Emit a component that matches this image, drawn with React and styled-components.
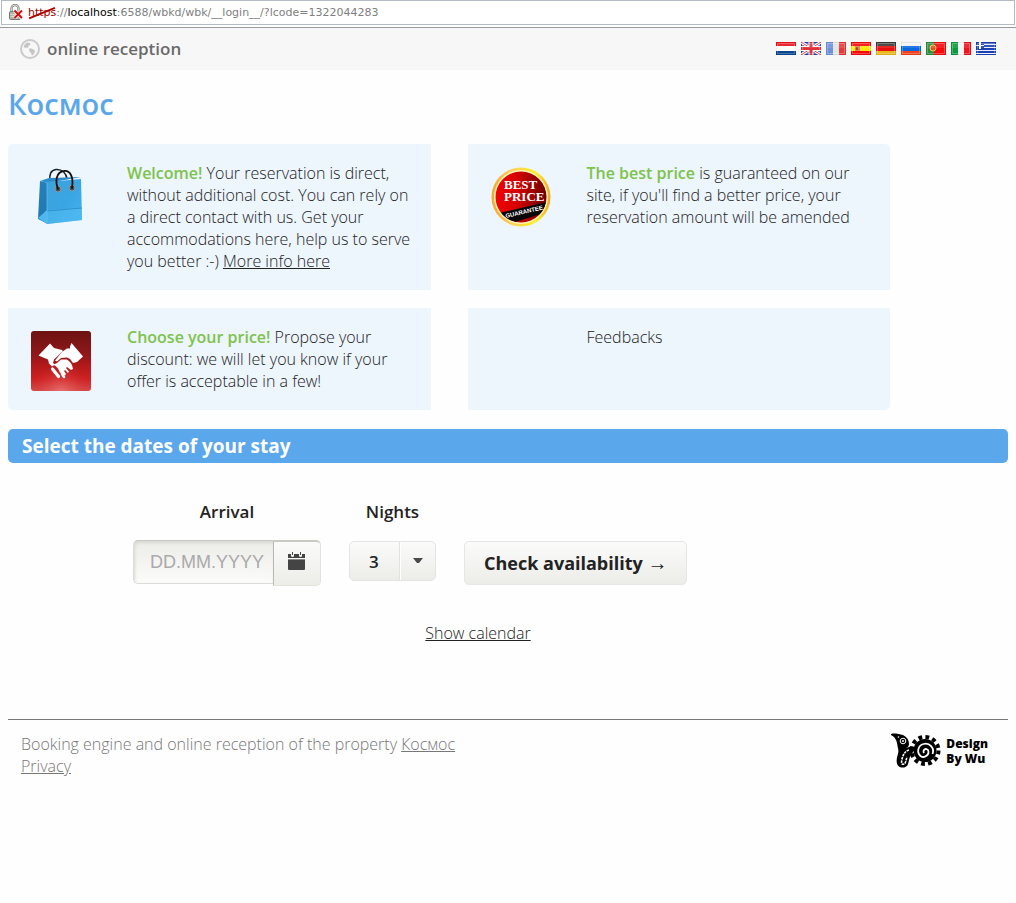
import { useState } from "react";
import styled, { createGlobalStyle } from "styled-components";

const flags = ["nl", "gb", "fr", "es", "de", "ru", "pt", "it", "gr"];

const languages = {
    nl: "Nederlands",
    gb: "English",
    fr: "Français",
    es: "Español",
    de: "Deutsch",
    ru: "Русский",
    pt: "Português",
    it: "Italiano",
    gr: "Ελληνικά",
};

function FlagShape({ code }) {
    switch (code) {
        case "nl":
            return (
                <>
                    <path fill="#e8121c" d="M0 0h20v4H0z" />
                    <path fill="#fff" d="M0 4h20v5H0z" />
                    <path fill="#0a4590" d="M0 9h20v4H0z" />
                </>
            );
        case "gb":
            return (
                <>
                    <path fill="#2447a5" d="M0 0h20v13H0z" />
                    <path stroke="#fff" strokeWidth="3" d="M0 0l20 13M20 0L0 13" />
                    <path stroke="#e0303a" strokeWidth="1" d="M0 0l20 13M20 0L0 13" />
                    <path stroke="#fff" strokeWidth="5" d="M10 0v13M0 6.500h20" />
                    <path stroke="#e0303a" strokeWidth="3" d="M10 0v13M0 6.500h20" />
                </>
            );
        case "fr":
            return (
                <>
                    <path fill="#6f92d8" d="M0 0h7v13H0z" />
                    <path fill="#e4e4e4" d="M7 0h6v13H7z" />
                    <path fill="#e83a3a" d="M13 0h7v13h-7z" />
                </>
            );
        case "es":
            return (
                <>
                    <path fill="#f80808" d="M0 0h20v13H0z" />
                    <path fill="#fbe808" d="M0 4h20v5H0z" />
                    <path fill="#d88a50" d="M4 4h5v5H4z" />
                    <path fill="#b04030" d="M5 5h2v3H5z" />
                </>
            );
        case "de":
            return (
                <>
                    <path fill="#3a3a3a" d="M0 0h20v4H0z" />
                    <path fill="#e81010" d="M0 4h20v5H0z" />
                    <path fill="#e8b818" d="M0 9h20v4H0z" />
                </>
            );
        case "ru":
            return (
                <>
                    <path fill="#f2f2f2" d="M0 0h20v4H0z" />
                    <path fill="#0a68e0" d="M0 4h20v5H0z" />
                    <path fill="#f0401c" d="M0 9h20v4H0z" />
                </>
            );
        case "pt":
            return (
                <>
                    <path fill="#2c8a3c" d="M0 0h8v13H0z" />
                    <path fill="#f40c0c" d="M8 0h12v13H8z" />
                    <circle cx="7" cy="6" r="3" fill="#e05030" stroke="#f2d24c" />
                </>
            );
        case "it":
            return (
                <>
                    <path fill="#0c9a3c" d="M0 0h7v13H0z" />
                    <path fill="#f4f4f4" d="M7 0h6v13H7z" />
                    <path fill="#f0141c" d="M13 0h7v13h-7z" />
                </>
            );
        default:
            return (
                <>
                    <path fill="#1c40b4" d="M0 0h20v13H0z" />
                    <path fill="#e8eefa" d="M0 2h20v1H0zM0 5h20v1H0zM0 8h20v1H0zM0 11h20v1H0z" />
                    <path fill="#1c40b4" d="M0 0h8v7H0z" />
                    <path fill="#fff" d="M3 0h2v7H3zM0 3h8v1H0z" />
                </>
            );
    }
}

function Flag({ code }) {
    return (
        <svg width="20" height="13" viewBox="0 0 20 13">
            <FlagShape code={code} />
            <path fill="#fff" opacity=".1" d="M1 1h18v5H1z" />
            <path fill="none" stroke="#000" opacity=".06" d="M.5.5h19v12H.5z" />
            <path fill="none" stroke="#fff" opacity=".25" d="M1.500 1.500h17v10h-17z" />
        </svg>
    );
}

function LockIcon() {
    return (
        <svg width="16" height="17" viewBox="0 0 16 17">
            <path d="M3.500 8V4.500a3.500 3.500 0 0 1 7 0V8" fill="none" stroke="#8a8a84" strokeWidth="2.400" />
            <path d="M3.500 8V4.500a3.500 3.500 0 0 1 7 0V8" fill="none" stroke="#d4d4ce" strokeWidth="1" />
            <rect x="1.500" y="7.500" width="11" height="8" rx="1" fill="#b4b4ae" stroke="#77776f" />
            <path d="M2.500 10.500h9M2.500 12.500h9" stroke="#d8d8d2" />
            <path d="M6.500 6.500l7.500 7.500M14 6.500L6.500 14" stroke="#fff" strokeWidth="3.500" />
            <path d="M6.500 6.500l7.500 7.500M14 6.500L6.500 14" stroke="#d01010" strokeWidth="2" />
        </svg>
    );
}

function GlobeIcon() {
    return (
        <svg width="20" height="20" viewBox="0 0 20 20">
            <circle cx="10" cy="10" r="9" fill="#f7f7f7" stroke="#cacaca" strokeWidth="2" />
            <path fill="#c6c6c6" d="M5 5l2-1.500 3 .5.500 1.500-2 1.500-.5 2-1.500-.5L5 9 3.500 7.500z" />
            <path fill="#c6c6c6" d="M9 9.500l2.500 0 3 1.500.5 1.500-1.500 3-1.500 1-1-2.500-1.500-1.500z" />
        </svg>
    );
}

function BagIcon() {
    return (
        <svg width="60" height="60" viewBox="0 0 60 60">
            <defs>
                <linearGradient id="bagFront" x1="0" y1="0" x2="1" y2="1">
                    <stop offset="0" stopColor="#3fa3dc" />
                    <stop offset=".5" stopColor="#39a5e2" />
                    <stop offset="1" stopColor="#45b5ef" />
                </linearGradient>
                <linearGradient id="bagSide" x1="0" y1="0" x2="0" y2="1">
                    <stop offset="0" stopColor="#2680b8" />
                    <stop offset="1" stopColor="#1f77ad" />
                </linearGradient>
            </defs>
            <path d="M19 14C18 7 20 3 25 2.500C31 2 35 6 36 12" fill="none" stroke="#16232c" strokeWidth="1.600" />
            <path fill="url(#bagSide)" d="M9 14l8 2v41l-10-5z" />
            <path fill="#2b8ecb" d="M9 14l9-3 32-1-33 6z" />
            <path fill="url(#bagFront)" d="M16 15l34-3 1 41-35 4z" />
            <path fill="#4db7ee" d="M7 51l9-8 0 14z" />
            <path fill="#53bcf2" opacity=".55" d="M16 43l35-2v12l-35 4z" />
            <path d="M16 44l35-3" stroke="#2583bd" strokeWidth=".7" />
            <path d="M16 16v41" stroke="#66c2f0" strokeWidth=".7" />
            <circle cx="27" cy="22" r="3" fill="#47545b" stroke="#8c9ba2" />
            <circle cx="41" cy="21" r="3" fill="#47545b" stroke="#8c9ba2" />
            <path
                d="M27 22C24 14 25 5 33 4C39 3 43 10 41 21"
                fill="none"
                stroke="#111"
                strokeWidth="1.800"
                strokeLinecap="round"
            />
        </svg>
    );
}

function BestPriceIcon() {
    return (
        <svg width="60" height="60" viewBox="0 0 60 60">
            <defs>
                <linearGradient id="gold" x1="0" y1="0" x2="1" y2="0">
                    <stop offset="0" stopColor="#f4a62a" />
                    <stop offset=".35" stopColor="#fbd25c" />
                    <stop offset=".75" stopColor="#fff01c" />
                    <stop offset="1" stopColor="#eda52a" />
                </linearGradient>
                <linearGradient id="badgeRed" x1="0" y1="0" x2="1" y2="0">
                    <stop offset="0" stopColor="#f00404" />
                    <stop offset=".4" stopColor="#d80000" />
                    <stop offset="1" stopColor="#6e0000" />
                </linearGradient>
                <clipPath id="badgeClip">
                    <circle cx="30" cy="30" r="25.500" />
                </clipPath>
            </defs>
            <circle cx="30" cy="30" r="29.500" fill="url(#gold)" />
            <circle cx="30" cy="30" r="27" fill="#fff3b8" />
            <circle cx="30" cy="30" r="25.500" fill="url(#badgeRed)" />
            <path clipPath="url(#badgeClip)" fill="#080808" d="M4 47l52-12v10L15 58z" />
            <BadgeText x="13" y="22">BEST</BadgeText>
            <BadgeText x="13" y="34">PRICE</BadgeText>
            <BadgeSmall x="15" y="51" transform="rotate(-13 15 51)">GUARANTEE</BadgeSmall>
        </svg>
    );
}

function HandshakeIcon() {
    return (
        <svg width="60" height="60" viewBox="0 0 60 60">
            <defs>
                <linearGradient id="shakeBg" x1="0" y1="0" x2="0" y2="1">
                    <stop offset="0" stopColor="#6c1212" />
                    <stop offset=".45" stopColor="#96191a" />
                    <stop offset=".5" stopColor="#a81617" />
                    <stop offset=".8" stopColor="#ce2123" />
                    <stop offset="1" stopColor="#d44a4a" />
                </linearGradient>
                <radialGradient id="shakeGlow" cx=".5" cy="1.050" r=".5">
                    <stop offset="0" stopColor="#f08a88" stopOpacity=".7" />
                    <stop offset="1" stopColor="#e03030" stopOpacity="0" />
                </radialGradient>
            </defs>
            <rect width="60" height="60" rx="3" fill="url(#shakeBg)" />
            <rect width="60" height="60" rx="3" fill="url(#shakeGlow)" />
            <path fill="#fff" d="M7.500 24.500L19 12.500l4 4.500 8 2 1 1-9 8.500-1 3.500 2 1.500-3 2-3-3-1-4z" />
            <path fill="#fff" d="M31 21l5-3.500 3 0 0-2 1.500-3.500L52 25.500l-6 5.500-4 1-3-4-3-1.500-6 .5-4 3.500-2-1z" />
            <path
                fill="#fff"
                d="M22 34l4-2 4-3.500 6 0 3 2.500 2 3 1 4-2 1-4-3-1 1 3 3.500-1 1.500-3-3-1 1 2 3-1 1.500-3-1-2-2-2-4-3-3z"
            />
            <path d="M21.500 38l6 7.500" stroke="#fff" strokeWidth="3.200" strokeLinecap="round" />
            <path d="M31 43l2 3" stroke="#fff" strokeWidth="2.600" strokeLinecap="round" />
        </svg>
    );
}

function CalendarIcon() {
    return (
        <svg width="17" height="18" viewBox="0 0 17 18">
            <path fill="#444" d="M0 2h3v1.500a1.500 1.500 0 0 0 3 0V2h5v1.500a1.500 1.500 0 0 0 3 0V2h3v4H0z" />
            <path fill="#444" d="M4 0h1v3H4zM12 0h1v3h-1zM0 8h17v9a1 1 0 0 1-1 1H1a1 1 0 0 1-1-1z" />
            <path fill="#888" d="M0 7h17v1H0z" />
        </svg>
    );
}

function WuLogo() {
    return (
        <svg width="50" height="36" viewBox="0 0 50 36">
            <circle cx="34" cy="17.500" r="11.500" fill="#000" />
            <circle
                cx="34"
                cy="17.500"
                r="13.500"
                fill="none"
                stroke="#000"
                strokeWidth="4"
                strokeDasharray="3.800 3.270"
            />
            <path
                d="M33 20a2.500 2.500 0 1 1 4-3a5 5 0 0 1-7.500 6a7 7 0 0 1 3-12a7.500 7.500 0 0 1 9 10"
                fill="none"
                stroke="#fff"
                strokeWidth="1.800"
            />
            <path
                fill="#000"
                d="M0 1c3-1 8 0 12 1c4 2 6 5 6 9c0 2-1 3-3 4c3-1 6-2 8-1l1 2-4 6c-2 3-2 6-3 9c-1 3-4 4-7 3.500c-4-1-5-5-4-10c1-4 2-6 1-9C6 10 6 5 0 2z"
            />
            <circle cx="12" cy="8" r="2.800" fill="none" stroke="#fff" strokeWidth="1" />
            <circle cx="12" cy="8" r="1" fill="#fff" />
            <circle cx="7.500" cy="4" r=".8" fill="#fff" />
            <path
                d="M18 17c-4 1-6 5-7 9c-1 4 0 6 2 5c2-1 2-4 3-7"
                fill="none"
                stroke="#fff"
                strokeWidth="1.600"
                strokeDasharray="2.500 .8"
            />
        </svg>
    );
}

export default function App() {
    const [arrival, setArrival] = useState("");
    const [nights, setNights] = useState("3");

    return (
        <>
            <GlobalStyle />
            <AddressBar>
                <Address>
                    <LockIcon />
                    <AddressText>
                        <Scheme>https</Scheme>://<Host>localhost</Host>:6588/wbkd/wbk/__login__/?lcode=1322044283
                    </AddressText>
                </Address>
            </AddressBar>
            <Header>
                <Brand>
                    <GlobeIcon />
                    online reception
                </Brand>
                <FlagList>
                    {flags.map((code) => (
                        <FlagLink key={code} href="#" aria-label={languages[code]}>
                            <Flag code={code} />
                        </FlagLink>
                    ))}
                </FlagList>
            </Header>
            <Main>
                <Title>Космос</Title>
                <Cards>
                    <Card $corners="5px 0 0 0">
                        <CardIcon><BagIcon /></CardIcon>
                        <CardText>
                            <Lead>Welcome!</Lead> Your reservation is direct, without additional cost. You can
                            rely on a direct contact with us. Get your accommodations here, help us to serve
                            you better :-) <TextLink href="#">More info here</TextLink>
                        </CardText>
                    </Card>
                    <Card $corners="0 5px 0 0">
                        <CardIcon><BestPriceIcon /></CardIcon>
                        <CardText>
                            <Lead>The best price</Lead> is guaranteed on our site, if you'll find a better
                            price, your reservation amount will be amended
                        </CardText>
                    </Card>
                    <Card $corners="0 0 0 5px">
                        <CardIcon><HandshakeIcon /></CardIcon>
                        <CardText>
                            <Lead>Choose your price!</Lead> Propose your discount: we will let you know if your
                            offer is acceptable in a few!
                        </CardText>
                    </Card>
                    <Card $corners="0 0 5px 0">
                        <CardIcon />
                        <CardText>Feedbacks</CardText>
                    </Card>
                </Cards>
                <SectionTitle>Select the dates of your stay</SectionTitle>
                <Form onSubmit={(event) => event.preventDefault()}>
                    <Field>
                        <Label htmlFor="arrival">Arrival</Label>
                        <DateGroup>
                            <DateInput
                                id="arrival"
                                type="text"
                                placeholder="DD.MM.YYYY"
                                value={arrival}
                                onChange={(event) => setArrival(event.target.value)}
                            />
                            <CalendarButton type="button" aria-label="Open calendar">
                                <CalendarIcon />
                            </CalendarButton>
                        </DateGroup>
                    </Field>
                    <Field>
                        <Label htmlFor="nights">Nights</Label>
                        <SelectBox>
                            <Select id="nights" value={nights} onChange={(event) => setNights(event.target.value)}>
                                {["1", "2", "3", "4", "5", "6", "7"].map((n) => (
                                    <option key={n}>{n}</option>
                                ))}
                            </Select>
                            <SelectArrow>
                                <svg width="10" height="6" viewBox="0 0 10 6">
                                    <path fill="#4a4a4a" d="M0 0h10L6 5H4z" />
                                </svg>
                            </SelectArrow>
                        </SelectBox>
                    </Field>
                    <Submit type="submit">
                        Check availability <Arrow>→</Arrow>
                    </Submit>
                </Form>
                <CalendarRow>
                    <TextLink href="#">Show calendar</TextLink>
                </CalendarRow>
                <Footer>
                    <FooterText>
                        Booking engine and online reception of the property <TextLink href="#">Космос</TextLink>
                        <br />
                        <TextLink href="#">Privacy</TextLink>
                    </FooterText>
                    <Credit href="#">
                        <WuLogo />
                        <CreditText>
                            Design
                            <br />
                            By Wu
                        </CreditText>
                    </Credit>
                </Footer>
            </Main>
        </>
    );
}

const GlobalStyle = createGlobalStyle`
    * {
        box-sizing: border-box;
    }

    body {
        margin: 0;
        background: #fefefe;
        color: #222;
        font-family: "Open Sans", "Noto Sans", sans-serif;
        font-size: 16px;
        font-weight: 300;
        line-height: 22px;
    }

    svg {
        display: block;
        flex-shrink: 0;
    }
`;

const AddressBar = styled.div`
    padding: 0 1px 2px;
    background: #fff;
    border-bottom: 1px solid #999;
`;

const Address = styled.div`
    display: flex;
    align-items: center;
    gap: 4px;
    height: 25px;
    padding: 0 6px;
    border: 1px solid #b4bac6;
    font-family: "DejaVu Sans", sans-serif;
    font-size: 11px;
    font-weight: 400;
    color: #808080;
`;

const AddressText = styled.span`
    white-space: nowrap;
`;

const Scheme = styled.span`
    position: relative;
    color: #a00000;

    &::after {
        content: "";
        position: absolute;
        left: 0;
        right: 0;
        top: 6px;
        height: 2px;
        background: #b00000;
        transform: rotate(-22deg);
    }
`;

const Host = styled.span`
    color: #000;
`;

const Header = styled.header`
    display: flex;
    align-items: center;
    justify-content: space-between;
    height: 42px;
    padding: 0 20px;
    background: #f7f7f7;
`;

const Brand = styled.div`
    display: flex;
    align-items: center;
    gap: 7px;
    font-size: 17px;
    font-weight: 600;
    color: #6a6a6a;
`;

const FlagList = styled.nav`
    display: flex;
    gap: 5px;
    padding-bottom: 2px;
`;

const FlagLink = styled.a`
    display: block;
`;

const Main = styled.main`
    padding: 0 8px;
`;

const Title = styled.h1`
    margin: 0;
    padding: 14px 0 20px;
    font-size: 29px;
    font-weight: 600;
    line-height: 40px;
    color: #5ba7ec;
`;

const Cards = styled.section`
    display: grid;
    grid-template-columns: 1fr 1fr;
    gap: 18px 37px;
    width: 88.2%;
`;

const Card = styled.article`
    display: flex;
    padding: 18px 15px 18px 23px;
    background: #edf5fd;
    border-radius: ${(props) => props.$corners};
`;

const CardIcon = styled.div`
    flex: 0 0 96px;
    padding-top: 5px;
`;

const CardText = styled.p`
    flex: 1;
    margin: 0;
`;

const Lead = styled.strong`
    font-weight: 600;
    color: #7ec34b;
`;

const TextLink = styled.a`
    color: inherit;
    text-decoration: underline;
`;

const BadgeText = styled.text`
    fill: #fff;
    font-family: "Liberation Serif", serif;
    font-size: 13px;
    font-weight: 700;
`;

const BadgeSmall = styled.text`
    fill: #fff;
    font-family: "Liberation Sans", sans-serif;
    font-size: 6px;
    font-weight: 700;
`;

const SectionTitle = styled.h2`
    margin: 19px 0 0;
    padding: 5px 14px;
    border-radius: 5px;
    background: #5ba7ec;
    color: #fff;
    font-size: 19px;
    font-weight: 700;
    line-height: 24px;
`;

const Form = styled.form`
    display: flex;
    align-items: flex-end;
    gap: 28px;
    padding: 37px 0 0 125px;
`;

const Field = styled.div`
    display: flex;
    flex-direction: column;
    height: 86px;
`;

const Label = styled.label`
    margin-bottom: 16px;
    font-size: 17px;
    font-weight: 600;
    line-height: 24px;
    text-align: center;
`;

const DateGroup = styled.div`
    display: flex;
    width: 188px;
    height: 46px;
`;

const DateInput = styled.input`
    flex: 1;
    min-width: 0;
    height: 44px;
    padding: 0 0 0 16px;
    border: 1px solid #dcdcd8;
    border-top-color: #c8c8c2;
    border-right: 0;
    border-radius: 5px 0 0 5px;
    background: linear-gradient(#ecece8, #fbfbfa);
    box-shadow: inset 1px 2px 3px #d8d8d3;
    font-family: "Liberation Sans", sans-serif;
    font-size: 18px;
    color: #222;

    &::placeholder {
        color: #aaa;
    }
`;

const CalendarButton = styled.button`
    display: flex;
    align-items: center;
    justify-content: center;
    width: 48px;
    padding: 0 2px 6px 0;
    border: 1px solid #e2e2de;
    border-top: 2px solid #cacac4;
    border-left-color: #b8b8b4;
    border-radius: 0 5px 5px 0;
    background: linear-gradient(#fbfbfb, #ecece8);
`;

const SelectBox = styled.div`
    position: relative;
    width: 87px;
    margin-top: 1px;
`;

const Select = styled.select`
    appearance: none;
    display: block;
    width: 100%;
    height: 40px;
    padding: 0 0 0 19px;
    border: 1px solid #e4e4e4;
    border-radius: 5px;
    background: linear-gradient(#fbfbfb, #ecece8);
    color: #222;
    font-family: inherit;
    font-size: 17px;
    font-weight: 600;
`;

const SelectArrow = styled.span`
    position: absolute;
    top: 1px;
    right: 0;
    bottom: 1px;
    display: flex;
    align-items: center;
    justify-content: center;
    width: 37px;
    border-left: 1px solid #e2e2e0;
    box-shadow: inset 1px 0 #fff;
    pointer-events: none;
`;

const Submit = styled.button`
    height: 44px;
    margin-bottom: 1px;
    padding: 0 19px;
    border: 1px solid #e6e6e6;
    border-radius: 5px;
    background: linear-gradient(#fbfbfb, #ecece8);
    color: #222;
    font-family: inherit;
    font-size: 18px;
    font-weight: 700;
`;

const Arrow = styled.span`
    font-family: "Liberation Serif", serif;
    font-size: 20px;
    font-weight: 400;
`;

const CalendarRow = styled.div`
    width: 94%;
    padding: 36px 0 75px;
    text-align: center;
`;

const Footer = styled.footer`
    display: flex;
    justify-content: space-between;
    padding: 13px 20px 0 13px;
    border-top: 1px solid #777;
    color: #777;
`;

const FooterText = styled.p`
    margin: 0;
`;

const Credit = styled.a`
    display: flex;
    gap: 5px;
    color: #000;
    font-size: 12px;
    font-weight: 800;
    line-height: 15px;
    text-decoration: none;
`;

const CreditText = styled.span`
    padding-top: 3px;
`;
